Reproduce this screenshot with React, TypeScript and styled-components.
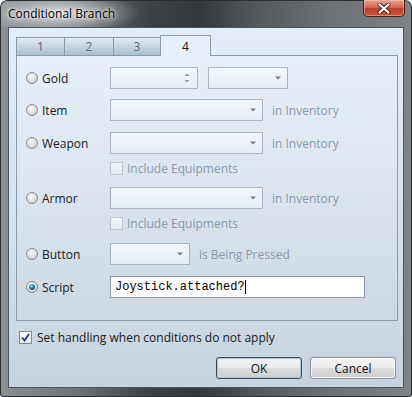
import React from 'react';
import styled, { createGlobalStyle } from 'styled-components';

const GlobalStyle = createGlobalStyle`
  html, body {
    margin: 0;
    padding: 0;
    background: #ffffff;
  }
  body {
    font-family: "Open Sans", "Noto Sans", sans-serif;
    font-size: 12px;
  }
`;

const Window = styled.div`
  width: 412px;
  height: 397px;
  box-sizing: border-box;
  display: flex;
  flex-direction: column;
  padding: 0 8px 9px 8px;
  border-radius: 7px 7px 3px 3px;
  box-shadow: inset 0 0 0 1px #2b2e31;
  background:
    radial-gradient(ellipse 80px 22px at 60px 13px, rgba(235, 238, 240, 0.8), transparent),
    linear-gradient(90deg, #8d9093 0%, #717477 18%, #3f4245 36%, #35383b 48%, #55585b 62%, #6e7174 80%, #808386 100%);
`;

const TitleBar = styled.div`
  height: 27px;
  display: flex;
  align-items: flex-start;
`;

const Title = styled.span`
  margin-top: 5px;
  color: #000;
  font-size: 12px;
  text-shadow: 0 0 6px #fff, 0 0 3px rgba(255, 255, 255, 0.9);
`;

const CloseButton = styled.div`
  margin-left: auto;
  margin-right: -1px;
  width: 42px;
  height: 17px;
  box-sizing: border-box;
  display: flex;
  align-items: center;
  justify-content: center;
  border: 1px solid #4a1e16;
  border-top: none;
  border-radius: 0 0 5px 5px;
  background: linear-gradient(180deg, #e7a493 0%, #d06a55 45%, #b8402b 55%, #c9543c 100%);
  box-shadow: inset 0 0 0 1px rgba(255, 200, 180, 0.45);
`;

const Client = styled.div`
  flex: 1;
  display: flex;
  flex-direction: column;
  box-sizing: border-box;
  padding: 7px 5px 0 7px;
  border: 1px solid #4a5460;
  background: linear-gradient(180deg, #e5eef7 0%, #d8e2ec 50%, #c8d3de 100%);
`;

const TabStrip = styled.div`
  display: flex;
  align-items: flex-end;
  height: 21px;
  margin-bottom: -1px;
  position: relative;
  z-index: 1;
`;

const Tab = styled.div<{ $active?: boolean; $width: number }>`
  width: ${(p) => p.$width}px;
  height: ${(p) => (p.$active ? 21 : 19)}px;
  box-sizing: border-box;
  margin-left: -1px;
  display: flex;
  align-items: center;
  justify-content: center;
  border: 1px solid #8b9aaa;
  border-bottom: ${(p) => (p.$active ? 'none' : '1px solid #8b9aaa')};
  color: ${(p) => (p.$active ? '#111' : '#5e6c7b')};
  font-size: 12px;
  background: ${(p) =>
    p.$active
      ? '#e7eff8'
      : 'linear-gradient(180deg, #e3ebf3 0%, #c9d7e4 45%, #a9bfd2 100%)'};

  &:first-child {
    margin-left: 0;
  }
`;

const Panel = styled.div`
  height: 266px;
  box-sizing: border-box;
  border: 1px solid #8b9aaa;
  background: linear-gradient(180deg, #e7eff8 0%, #dbe4ee 55%, #cdd8e3 100%);
  padding: 11px 0 0 9px;
  display: flex;
  flex-direction: column;
`;

const Row = styled.div<{ $top?: number }>`
  display: flex;
  align-items: center;
  height: 22px;
  margin-top: ${(p) => p.$top ?? 0}px;
`;

const SubRow = styled.div<{ $top?: number }>`
  display: flex;
  align-items: center;
  height: 13px;
  margin-top: ${(p) => p.$top ?? 0}px;
  padding-left: 84px;
  gap: 4px;
`;

const OptionLabel = styled.label`
  width: 84px;
  display: flex;
  align-items: center;
  gap: 4px;
  color: #1a1a1a;
  font-size: 12px;
`;

const Radio = styled.span<{ $checked?: boolean }>`
  width: 12px;
  height: 12px;
  box-sizing: border-box;
  border-radius: 50%;
  border: 1px solid #8a8d90;
  background: radial-gradient(circle at 40% 35%, #fafafa 0%, #dcdcdc 55%, #bcbcbc 100%);
  display: flex;
  align-items: center;
  justify-content: center;

  &::after {
    content: '';
    display: ${(p) => (p.$checked ? 'block' : 'none')};
    width: 6px;
    height: 6px;
    border-radius: 50%;
    background: radial-gradient(circle at 40% 35%, #8ee0f8 0%, #1c7aa6 50%, #063a56 100%);
  }
`;

const Field = styled.div<{ $width: number }>`
  width: ${(p) => p.$width}px;
  height: 22px;
  box-sizing: border-box;
  border: 1px solid #a7b4c1;
  background: linear-gradient(180deg, #f2f6fb 0%, #e6eef6 100%);
  display: flex;
  align-items: center;
  justify-content: flex-end;
  padding-right: 6px;
`;

const Controls = styled.div`
  display: flex;
  align-items: center;
  gap: 10px;
`;

const Hint = styled.span`
  color: #8a99aa;
  font-size: 12px;
  margin-left: -1px;
`;

const Check = styled.span<{ $disabled?: boolean }>`
  width: 13px;
  height: 13px;
  box-sizing: border-box;
  border: 1px solid ${(p) => (p.$disabled ? '#bcc6d0' : '#7e8a98')};
  background: ${(p) =>
    p.$disabled
      ? 'linear-gradient(180deg, #f2f5f8, #e4e9ef)'
      : 'linear-gradient(180deg, #ffffff, #e2e7ed)'};
  display: flex;
  align-items: center;
  justify-content: center;
`;

const ScriptInput = styled.div`
  width: 255px;
  height: 22px;
  box-sizing: border-box;
  border: 1px solid #8e99a5;
  background: #ffffff;
  display: flex;
  align-items: center;
  padding-left: 4px;
  font-family: "Liberation Mono", "DejaVu Sans Mono", monospace;
  font-size: 12px;
  color: #000;
`;

const Caret = styled.span`
  width: 1px;
  height: 14px;
  background: #000;
`;

const Footer = styled.div`
  display: flex;
  align-items: center;
  gap: 5px;
  margin: 10px 0 0 3px;
  height: 13px;
  color: #1a1a1a;
`;

const ButtonRow = styled.div`
  display: flex;
  justify-content: flex-end;
  gap: 8px;
  margin-top: 13px;
  padding-right: 2px;
`;

const Button = styled.button<{ $default?: boolean }>`
  width: 86px;
  height: 22px;
  box-sizing: border-box;
  border-radius: 3px;
  border: 1px solid ${(p) => (p.$default ? '#3d4a57' : '#8a9099')};
  background: linear-gradient(180deg, #f4f4f4 0%, #ebebeb 48%, #dcdcdc 52%, #cfcfcf 100%);
  box-shadow: inset 0 0 0 1px ${(p) => (p.$default ? '#a9c4dc' : '#fbfbfb')};
  font-family: "Open Sans", "Noto Sans", sans-serif;
  font-size: 12px;
  color: #111;
  padding: 0;
`;

const Arrow = () => (
  <svg width="6" height="4" viewBox="0 0 6 4">
    <path d="M0 0.5 L6 0.5 L3 3.5 Z" fill="#6f7e8d" />
  </svg>
);

const Spinner = () => (
  <svg width="6" height="12" viewBox="0 0 6 12" style={{ marginRight: 1 }}>
    <path d="M0.5 4 L5.5 4 L3 1.5 Z" fill="#8e9aa7" />
    <path d="M0.5 8 L5.5 8 L3 10.5 Z" fill="#8e9aa7" />
  </svg>
);

const Combo = ({ width }: { width: number }) => (
  <Field $width={width}>
    <Arrow />
  </Field>
);

const IncludeEquipments = ({ top }: { top: number }) => (
  <SubRow $top={top}>
    <Check $disabled />
    <Hint style={{ marginLeft: 0 }}>Include Equipments</Hint>
  </SubRow>
);

export default function App() {
  return (
    <>
      <GlobalStyle />
      <Window>
        <TitleBar>
          <Title>Conditional Branch</Title>
          <CloseButton>
            <svg width="14" height="11" viewBox="0 0 14 11">
              <path d="M2.5 1.5 L11.5 9.5 M11.5 1.5 L2.5 9.5" stroke="#5a1e12" strokeWidth="4" strokeLinecap="round" />
              <path d="M2.5 1.5 L11.5 9.5 M11.5 1.5 L2.5 9.5" stroke="#ffffff" strokeWidth="2.2" strokeLinecap="round" />
            </svg>
          </CloseButton>
        </TitleBar>

        <Client>
          <TabStrip>
            <Tab $width={49}>1</Tab>
            <Tab $width={50}>2</Tab>
            <Tab $width={48}>3</Tab>
            <Tab $width={51} $active>4</Tab>
          </TabStrip>

          <Panel>
            <Row>
              <OptionLabel><Radio />Gold</OptionLabel>
              <Controls>
                <Field $width={88}>
                  <Spinner />
                </Field>
                <Combo width={80} />
              </Controls>
            </Row>

            <Row $top={10}>
              <OptionLabel><Radio />Item</OptionLabel>
              <Controls>
                <Combo width={153} />
                <Hint>in Inventory</Hint>
              </Controls>
            </Row>

            <Row $top={11}>
              <OptionLabel><Radio />Weapon</OptionLabel>
              <Controls>
                <Combo width={153} />
                <Hint>in Inventory</Hint>
              </Controls>
            </Row>
            <IncludeEquipments top={8} />

            <Row $top={12}>
              <OptionLabel><Radio />Armor</OptionLabel>
              <Controls>
                <Combo width={153} />
                <Hint>in Inventory</Hint>
              </Controls>
            </Row>
            <IncludeEquipments top={8} />

            <Row $top={13}>
              <OptionLabel><Radio />Button</OptionLabel>
              <Controls>
                <Combo width={80} />
                <Hint>is Being Pressed</Hint>
              </Controls>
            </Row>

            <Row $top={11}>
              <OptionLabel><Radio $checked />Script</OptionLabel>
              <ScriptInput>
                Joystick.attached?
                <Caret />
              </ScriptInput>
            </Row>
          </Panel>

          <Footer>
            <Check>
              <svg width="9" height="9" viewBox="0 0 9 9">
                <path d="M1 4.5 L3.5 7.5 L8 1" stroke="#2f2f86" strokeWidth="1.8" fill="none" />
              </svg>
            </Check>
            Set handling when conditions do not apply
          </Footer>

          <ButtonRow>
            <Button $default>OK</Button>
            <Button>Cancel</Button>
          </ButtonRow>
        </Client>
      </Window>
    </>
  );
}
